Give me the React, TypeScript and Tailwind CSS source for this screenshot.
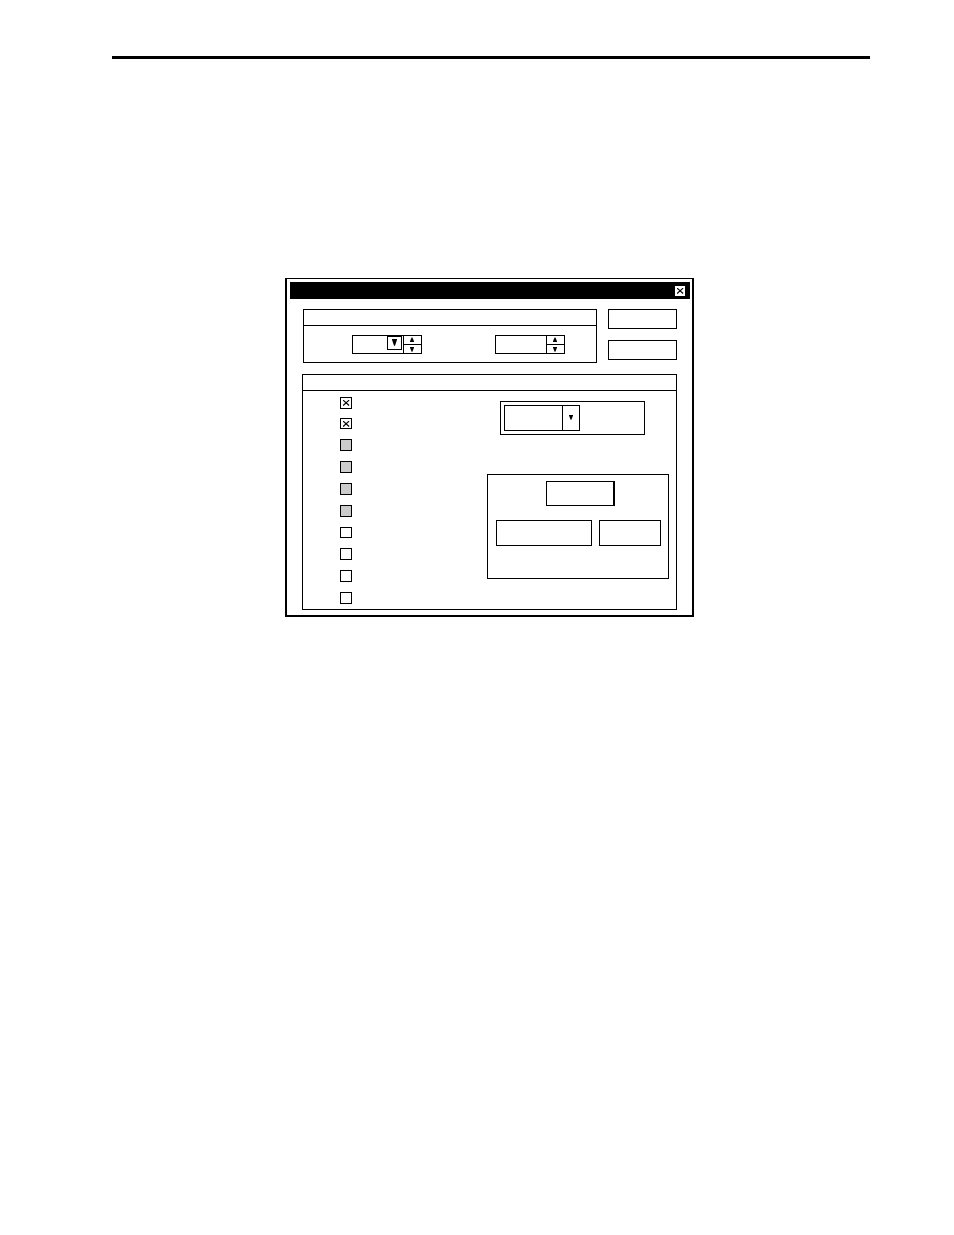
import React from "react";

const items = [
  { name: "Item 1", checked: true, row: "h-[21px]", box: "h-3" },
  { name: "Item 2", checked: true, row: "h-[21px]", box: "h-[11px]" },
  { name: "Item 3", disabled: true, row: "h-[22px]", box: "h-3" },
  { name: "Item 4", disabled: true, row: "h-[22px]", box: "h-3" },
  { name: "Item 5", disabled: true, row: "h-[22px]", box: "h-3" },
  { name: "Item 6", disabled: true, row: "h-[22px]", box: "h-3" },
  { name: "Item 7", row: "h-[21px]", box: "h-[11px]" },
  { name: "Item 8", row: "h-[22px]", box: "h-3" },
  { name: "Item 9", row: "h-[22px]", box: "h-3" },
  { name: "Item 10", row: "h-3", box: "h-3" },
];

const Cross = ({ className = "" }: { className?: string }) => (
  <svg viewBox="0 0 7 6" className={`w-[7px] h-[6px] ${className}`}>
    <path d="M0.1 0.1L6.1 5.5M6.1 0.1L0.1 5.5" stroke="black" strokeWidth="1.1" />
  </svg>
);

const Down = ({ className = "w-1 h-[5px]" }: { className?: string }) => (
  <svg viewBox="0 0 4 5" preserveAspectRatio="none" className={className}>
    <path d="M0 0H4V0.6L2.4 4.8H1.6L0 0.6Z" />
  </svg>
);

const Up = () => (
  <svg viewBox="0 0 4 5" preserveAspectRatio="none" className="w-1 h-[5px]">
    <path d="M0 5H4V4.2L2.4 0.4H1.6L0 4.2Z" />
  </svg>
);

const Spinner = ({
  name,
  children,
}: {
  name: string;
  children: React.ReactNode;
}) => (
  <div className="flex w-[70px] h-[19px] border border-black">
    <div className="relative flex-1 min-w-0">{children}</div>
    <div className="flex flex-col w-[18px] border-l border-black">
      <button
        aria-label={`${name} up`}
        className="flex items-center justify-center h-[9px] pr-px pb-px border-b border-black"
      >
        <Up />
      </button>
      <button
        aria-label={`${name} down`}
        className="flex items-center justify-center h-2 pr-px"
      >
        <Down />
      </button>
    </div>
  </div>
);

const App = () => {
  return (
    <main className="min-h-screen bg-white pt-14 pl-28 pr-[84px] text-xs font-['Liberation_Sans',sans-serif]">
      <hr className="border-0 h-[3px] bg-black" />

      <div className="pt-[219px] pr-[3px]">
        <section
          role="dialog"
          className="mx-auto w-[409px] border-2 border-t border-black"
        >
          <header className="flex items-start justify-end h-[17px] mt-[3px] ml-[3px] mr-[2px] pt-1 pr-[5px] bg-black">
            <button
              aria-label="Close"
              className="flex items-center justify-center size-[10px] pl-px bg-white"
            >
              <Cross />
            </button>
          </header>

          <div className="px-[15px] pt-[10px] pb-[5px]">
            <div className="flex gap-[11px] pl-px">
              <div className="flex-1 border border-black">
                <div className="h-4 border-b border-black" />
                <div className="flex justify-between pt-[9px] pb-2 pl-12 pr-[31px]">
                  <Spinner name="First value">
                    <select
                      aria-label="First value"
                      className="block appearance-none w-full h-full bg-white"
                    />
                    <span className="absolute top-0 right-px flex items-center justify-center w-[15px] h-[14px] pb-px border border-black pointer-events-none">
                      <Down className="w-[5px] h-[7px]" />
                    </span>
                  </Spinner>
                  <Spinner name="Second value">
                    <input
                      type="text"
                      aria-label="Second value"
                      className="block w-full h-full px-1"
                    />
                  </Spinner>
                </div>
              </div>
              <div className="flex flex-col gap-[11px] w-[69px]">
                <button aria-label="OK" className="h-5 border border-black" />
                <button aria-label="Cancel" className="h-5 border border-black" />
              </div>
            </div>

            <div className="mt-[11px] border border-black">
              <div className="h-4 border-b border-black" />
              <div className="flex justify-between pl-[37px] pr-[7px] pb-[5px]">
                <ul className="pt-[6px]">
                  {items.map((item) => (
                    <li key={item.name} className={item.row}>
                      <label className={`relative block w-3 ${item.box}`}>
                        <input
                          type="checkbox"
                          aria-label={item.name}
                          defaultChecked={item.checked}
                          disabled={item.disabled}
                          className="peer block appearance-none w-full h-full border border-black bg-white disabled:bg-[#cccccc]"
                        />
                        <Cross className="absolute top-[3px] left-[3px] hidden peer-checked:block" />
                      </label>
                    </li>
                  ))}
                </ul>

                <div className="w-[182px] pt-[10px]">
                  <div className="ml-[13px] w-[145px] h-[34px] p-[3px] border border-black">
                    <div className="relative w-[76px] h-[26px] border border-black">
                      <select
                        aria-label="Selection"
                        className="block appearance-none w-full h-full bg-white"
                      />
                      <span className="absolute inset-y-0 right-0 flex items-center justify-center w-[17px] pr-px pb-px border-l border-black pointer-events-none">
                        <Down />
                      </span>
                    </div>
                  </div>

                  <div className="mt-[39px] h-[105px] pt-[6px] pl-2 pr-[7px] border border-black">
                    <button
                      aria-label="Apply"
                      className="block ml-[50px] w-[69px] h-[25px] border border-r-2 border-black"
                    />
                    <div className="flex gap-[7px] mt-[14px]">
                      <button
                        aria-label="Select all"
                        className="w-[96px] h-[26px] border border-black"
                      />
                      <button
                        aria-label="Reset"
                        className="w-[62px] h-[26px] border border-black"
                      />
                    </div>
                  </div>
                </div>
              </div>
            </div>
          </div>
        </section>
      </div>
    </main>
  );
};

export default App;
